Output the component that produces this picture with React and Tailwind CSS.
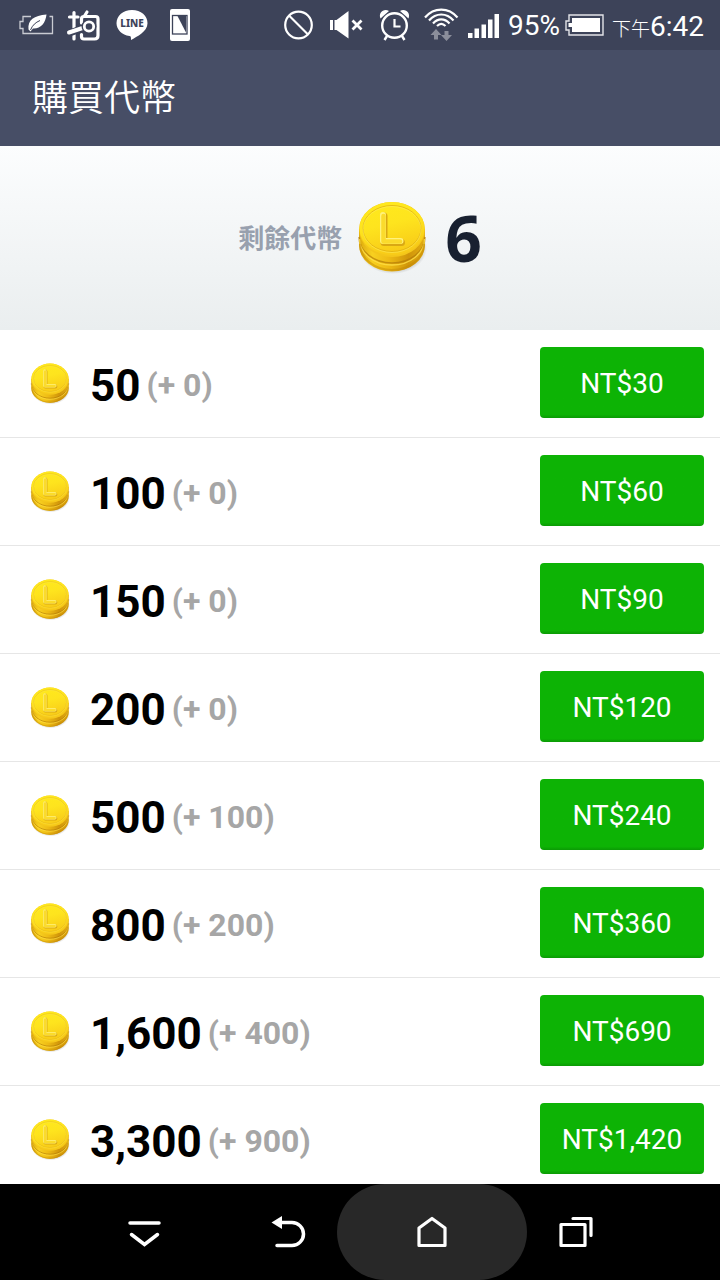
import { useState } from 'react'

const packs = [
  { coins: '50', bonus: '0', price: 'NT$30' },
  { coins: '100', bonus: '0', price: 'NT$60' },
  { coins: '150', bonus: '0', price: 'NT$90' },
  { coins: '200', bonus: '0', price: 'NT$120' },
  { coins: '500', bonus: '100', price: 'NT$240' },
  { coins: '800', bonus: '200', price: 'NT$360' },
  { coins: '1,600', bonus: '400', price: 'NT$690' },
  { coins: '3,300', bonus: '900', price: 'NT$1,420' },
];

function CoinDefs() {
  return (
    <svg className="absolute w-0 h-0" aria-hidden="true">
      <defs>
        <linearGradient id="coinFace" x1="0" y1="0" x2="0.3" y2="1">
          <stop offset="0" stopColor="#ffea1c" />
          <stop offset="0.5" stopColor="#fee41e" />
          <stop offset="1" stopColor="#f8cc18" />
        </linearGradient>
        <linearGradient id="coinEdge" x1="0" y1="0" x2="1" y2="0">
          <stop offset="0" stopColor="#dca90c" />
          <stop offset="0.2" stopColor="#f8d020" />
          <stop offset="0.45" stopColor="#eebb14" />
          <stop offset="0.75" stopColor="#d0950a" />
          <stop offset="1" stopColor="#e3ae12" />
        </linearGradient>
        <radialGradient id="coinShadow">
          <stop offset="0.7" stopColor="#555" stopOpacity="0.5" />
          <stop offset="1" stopColor="#555" stopOpacity="0" />
        </radialGradient>
      </defs>
    </svg>
  );
}

function Coin({ className }) {
  return (
    <svg viewBox="0 0 70 74" className={className} aria-hidden="true">
      <ellipse cx="36" cy="47" rx="34" ry="26" fill="url(#coinShadow)" />
      <path d="M2 28v16a33 26.500 0 0 0 66 0V28z" fill="url(#coinEdge)" />
      <path d="M2 36a33 26 0 0 0 66 0" fill="none" stroke="#b27a08" strokeWidth="1.500" opacity="0.7" />
      <path d="M2.500 38a32.500 26 0 0 0 65 0" fill="none" stroke="#ffe048" strokeWidth="1.300" opacity="0.8" />
      <path d="M3 43a32 26 0 0 0 64 0" fill="none" stroke="#c18708" strokeWidth="2" opacity="0.5" />
      <ellipse cx="35" cy="28.500" rx="33" ry="27.500" fill="#f4c61a" />
      <ellipse cx="35" cy="27.500" rx="32.500" ry="26.500" fill="url(#coinFace)" />
      <ellipse cx="35" cy="27.500" rx="29" ry="23" fill="none" stroke="#e0b010" strokeWidth="1" opacity="0.8" />
      <ellipse cx="35" cy="28.500" rx="29" ry="23" fill="none" stroke="#fff06a" strokeWidth="0.800" opacity="0.6" />
      <path d="M27 15v26.500h17.500" fill="none" stroke="#d9a814" strokeWidth="7" strokeLinecap="round" strokeLinejoin="round" />
      <path d="M26 14v26h17.500" fill="none" stroke="#fff27c" strokeWidth="6" strokeLinecap="round" strokeLinejoin="round" />
      <path d="M26.500 15v25.500h16.500" fill="none" stroke="#fbdb2c" strokeWidth="4.500" strokeLinecap="round" strokeLinejoin="round" />
    </svg>
  );
}

function NotificationIcons() {
  return (
    <svg width="200" height="50" viewBox="0 0 200 50" fill="none" stroke="#fff" aria-label="Notifications">
      {/* battery saver */}
      <path d="M31 16.500h-8v5h-3v7h3v5h29.500v-17h-3" stroke="#c9cbd2" strokeWidth="1.300" />
      <path d="M28.500 29.500C27.500 20 34 15.500 46.500 14.500c-1 9-6 14.500-13.500 14l-2.500 3z" fill="#fff" stroke="none" />
      <path d="M30.500 30c2-5 5-7.500 9.500-9.500" stroke="#3d4359" />
      {/* photo app */}
      <g strokeWidth="3.200" strokeLinecap="round" strokeLinejoin="round">
        <path d="M69.500 17h8.500M74 12.500v26.500" />
        <path d="M81.500 23v-4q0-2.500 2.500-2.500h11.500q2.500 0 2.500 2.500v16.500q0 3.500-3.500 3.500H84q-2.500 0-2.500-2.500v-2" />
        <path d="M87 12l-2.500 4" />
        <path d="M69.500 33l14-5" stroke="#3d4359" strokeWidth="7" strokeLinecap="butt" />
        <path d="M69 32.500l15-5" strokeWidth="4" />
        <circle cx="89" cy="26.500" r="7.500" fill="#3d4359" stroke="none" />
        <circle cx="89" cy="26.500" r="4.700" strokeWidth="2.800" />
      </g>
      {/* LINE */}
      <path d="M132 10c-9 0-15.500 5.800-15.500 13.200 0 6.500 5.500 11.600 13 12.800 1.500.2 1.500 1 1.500 4 6-3.500 16.500-8.500 16.500-16.800C147.500 15.800 141 10 132 10z" fill="#fff" stroke="none" />
      <text x="132" y="27" textAnchor="middle" fill="#3d4359" stroke="none" className="font-['Noto_Sans'] text-[10px] font-extrabold">LINE</text>
      {/* phone */}
      <rect x="170" y="9" width="20" height="32" rx="2" fill="#fff" stroke="none" />
      <rect x="172.500" y="15.500" width="14.500" height="18.500" stroke="#3d4359" strokeWidth="1.300" />
      <path d="M177.500 16l8.500 16.500V16z" fill="#3d4359" stroke="none" />
    </svg>
  );
}

function SystemIcons() {
  return (
    <svg width="220" height="50" viewBox="280 0 220 50" fill="none" stroke="#fff" aria-label="System status">
      <circle cx="297.500" cy="25" r="13.300" strokeWidth="2.200" />
      <path d="M288 15.500l19 19" strokeWidth="2.200" />
      <path d="M329 20h3v10h-3zM333.500 20h2l12-9v27.500l-12-8.500h-2z" fill="#fff" stroke="none" />
      <path d="M351.500 20.500l9 9M360.500 20.500l-9 9" strokeWidth="2.800" />
      {/* alarm */}
      <circle cx="393.500" cy="25.500" r="12.300" strokeWidth="2.400" />
      <path d="M393.500 19v7.500h6" strokeWidth="2.200" />
      <path d="M386 36l-2.500 4M401 36l2.500 4" strokeWidth="2.400" />
      <path d="M379.500 18.500c-2.500-6 3.500-10.500 8.500-7.500zM407.500 18.500c2.500-6-3.500-10.500-8.500-7.500z" fill="#fff" stroke="none" />
      {/* wifi */}
      <g strokeWidth="2.200">
        <path d="M424 17.500c9-10.500 23.500-10.500 32.500 0" />
        <path d="M428 20.500c7-8 17.500-8 24.500 0" />
        <path d="M432 23.500c5-5.500 11.500-5.500 16.500 0" />
        <path d="M436 26c3-3 5.500-3 8.500 0" />
      </g>
      <path d="M435 29l5.500 6H437v4.500h-4V35h-3.500zM445.500 41l-5.500-6h3.500v-4h4v4h3.500z" fill="#8b8e9b" stroke="none" />
      <path d="M467 33h4.500v5H467zM473.500 28.500h4.500V38h-4.500zM480.500 24.500h4.500V38h-4.500zM487 19.500h4.500V38H487zM493.500 14h4.500v24h-4.500z" fill="#fff" stroke="none" />
    </svg>
  );
}

function StatusBar() {
  return (
    <div className="flex h-[50px] shrink-0 items-center justify-between bg-[#3d4359] pr-4 text-white">
      <NotificationIcons />
      <div className="flex items-center">
        <SystemIcons />
        <span className="ml-[7px] pt-[2px] text-[28px]">95%</span>
        <svg width="40" height="22" viewBox="0 0 40 22" fill="none" className="ml-[5px]" aria-label="Battery">
          <path d="M4 1h34v20H4v-5H1V7h3z" stroke="#e3e4e8" strokeWidth="1.400" />
          <path d="M7 4h28v14H7v-5H3.500V9H7z" fill="#fff" />
        </svg>
        <span className="ml-[7px] flex items-baseline pt-1 leading-none">
          <span className="text-[19px] font-light">下午</span>
          <span className="text-[28px]">6:42</span>
        </span>
      </div>
    </div>
  );
}

function PackRow({ pack, onBuy }) {
  return (
    <li className="flex h-[108px] items-center border-b border-[#e6e6e6] pl-[30px] pr-4">
      <Coin className="h-[42px] w-10 shrink-0" />
      <span className="ml-5 pt-1 text-[44px] font-bold text-black">{pack.coins}</span>
      <span className="ml-[6px] pt-[2px] text-[32px] font-bold text-[#a6a6a6]">(+ {pack.bonus})</span>
      <button
        type="button"
        onClick={() => onBuy(pack)}
        className="mb-[2px] ml-auto h-[71px] w-[164px] rounded bg-linear-to-b from-[#0db305] from-95% to-[#0b9a05] pt-[2px] text-[28px] text-white"
      >
        {pack.price}
      </button>
    </li>
  );
}

function NavBar() {
  return (
    <nav className="grid h-24 shrink-0 grid-cols-4 bg-black px-[10%]">
      <button type="button" aria-label="Hide" className="flex items-center justify-center">
        <svg width="36" height="36" viewBox="0 0 36 36" fill="none" stroke="#fff" strokeWidth="3.500" strokeLinecap="round">
          <path d="M4 9h29M5.500 20.500l13 10 13-10" />
        </svg>
      </button>
      <button type="button" aria-label="Back" className="flex items-center justify-center">
        <svg width="36" height="36" viewBox="0 0 36 36" fill="none" stroke="#fff" strokeWidth="3.500" strokeLinecap="round">
          <path d="M11 8.500h11a11.500 11.500 0 0 1 0 23H7" />
          <path d="M1.500 8.500L12 2v13z" fill="#fff" stroke="none" />
        </svg>
      </button>
      <button type="button" aria-label="Home" className="relative flex items-center justify-center">
        <span className="absolute inset-y-0 -inset-x-[23px] rounded-full bg-[#282828]" />
        <svg width="36" height="36" viewBox="0 0 36 36" fill="none" stroke="#fff" strokeWidth="3.200" strokeLinejoin="round" className="relative">
          <path d="M5 31.500V14L18 4.500 31 14v17.500z" />
        </svg>
      </button>
      <button type="button" aria-label="Recent apps" className="flex items-center justify-center">
        <svg width="36" height="36" viewBox="0 0 36 36" fill="none" stroke="#fff" strokeWidth="3.200" strokeLinejoin="round" strokeLinecap="round">
          <path d="M3 10.500h24v21H3zM15 4.500h18v17" />
        </svg>
      </button>
    </nav>
  );
}

function App() {
  const [balance] = useState(6);
  const [selected, setSelected] = useState(null);

  return (
    <div className="flex h-screen flex-col bg-white font-[Roboto,'Noto_Sans_CJK_TC',sans-serif]">
      <CoinDefs />
      <StatusBar />
      <header className="flex h-24 shrink-0 items-center bg-[#474e66] px-8 pt-[2px]">
        <h1 className="text-[36px] font-[350] text-white">購買代幣</h1>
      </header>
      <section className="flex h-[184px] shrink-0 items-center justify-center bg-linear-to-b from-[#fcfdfe] to-[#eaeeef]">
        <span className="pt-[2px] text-[26px] font-bold text-[#98a0ae]">剩餘代幣</span>
        <Coin className="ml-[15px] h-[74px] w-[70px]" />
        <span className="ml-[18px] font-['Open_Sans'] text-[64px] leading-none font-bold text-[#182030]">{balance}</span>
      </section>
      <ul className="min-h-0 flex-1 overflow-hidden" data-selected={selected?.coins}>
        {packs.map((pack) => (
          <PackRow key={pack.coins} pack={pack} onBuy={setSelected} />
        ))}
      </ul>
      <NavBar />
    </div>
  );
}

export default App;
